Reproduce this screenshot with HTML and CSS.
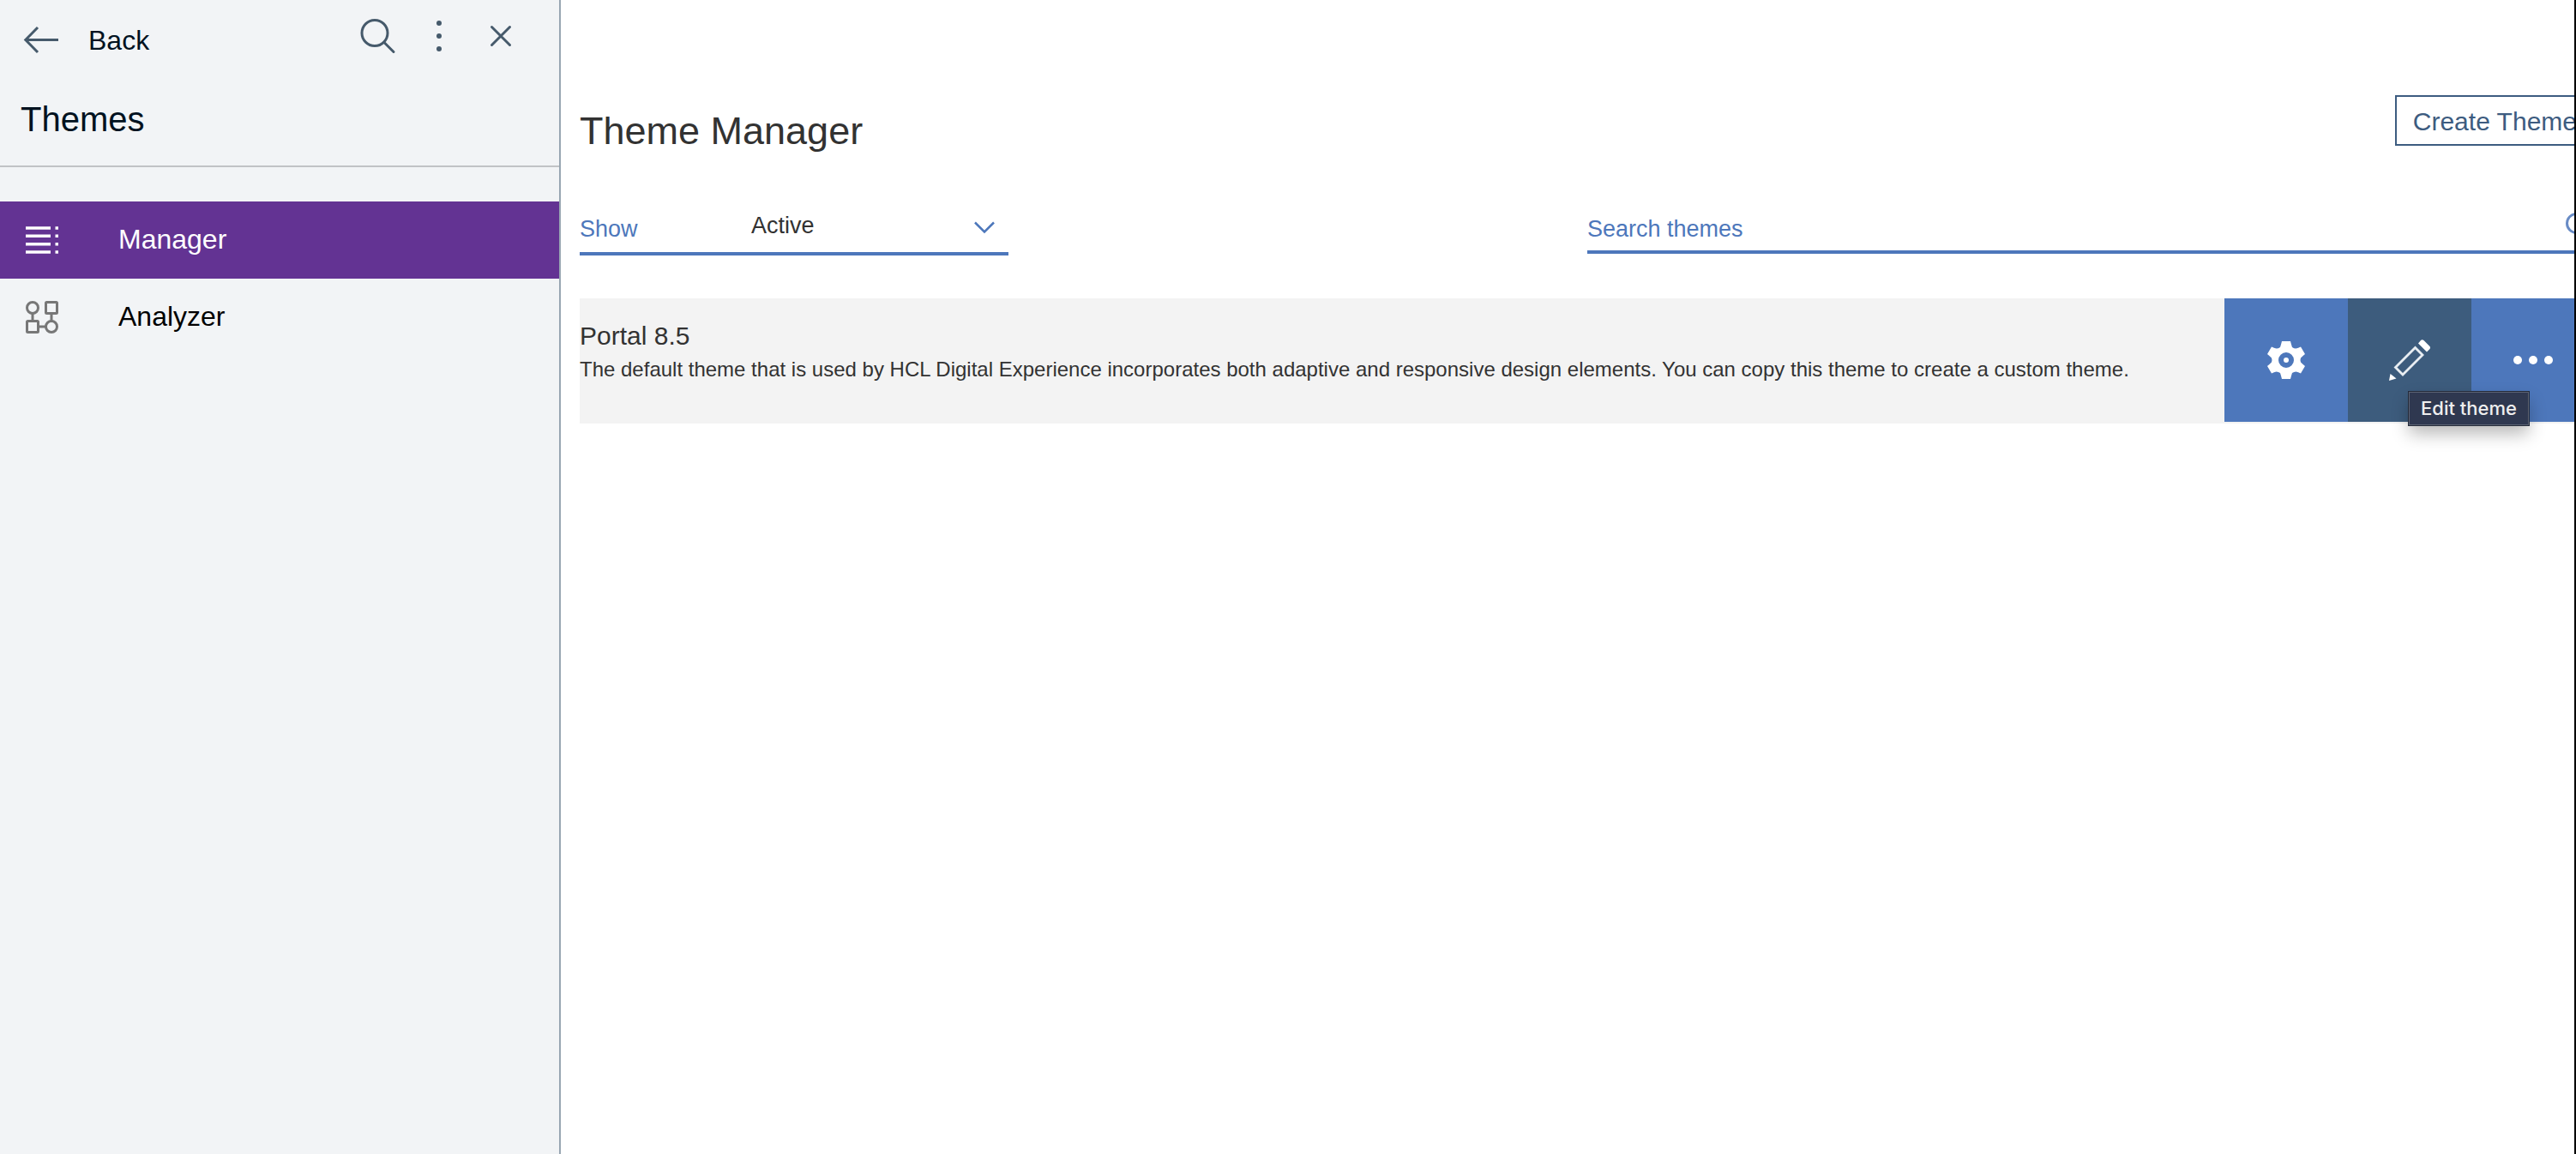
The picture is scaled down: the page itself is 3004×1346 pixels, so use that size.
FILE: index.html
```html
<!DOCTYPE html>
<html lang="en">
<head>
<meta charset="utf-8">
<title>Theme Manager</title>
<link rel="stylesheet" href="styles.css">
</head>
<body>
<div class="app">
  <aside class="sidebar">
    <header class="sidebar-header">
      <div class="toolbar">
        <a class="back" href="#">
          <svg width="40" height="32" viewBox="0 0 40 32" aria-hidden="true"><path d="M40 15.500H2M16 1L1.800 15.500L16 30" fill="none" stroke="currentColor" stroke-width="3"/></svg>
          Back
        </a>
        <div class="tools">
          <button type="button" class="tool" aria-label="Search">
            <svg width="42" height="42" viewBox="0 0 42 42"><g fill="none" stroke="currentColor" stroke-width="3" stroke-linecap="round"><circle cx="17" cy="17.500" r="15"/><path d="M28 28.500L39 39.500"/></g></svg>
          </button>
          <button type="button" class="tool" aria-label="More">
            <svg width="6" height="36" viewBox="0 0 6 36" fill="currentColor"><circle cx="3" cy="3" r="3"/><circle cx="3" cy="18" r="3"/><circle cx="3" cy="33" r="3"/></svg>
          </button>
          <button type="button" class="tool" aria-label="Close">
            <svg width="24" height="24" viewBox="0 0 24 24"><path d="M1.500 1.500L22.500 22.500M22.500 1.500L1.500 22.500" fill="none" stroke="currentColor" stroke-width="3" stroke-linecap="round"/></svg>
          </button>
        </div>
      </div>
      <h2 class="section-title">Themes</h2>
    </header>
    <nav class="nav">
      <a class="nav-item active" href="#" aria-current="page">
        <svg width="38" height="38" viewBox="0 0 38 38" aria-hidden="true"><path d="M0 5H29M0 14.300H29M0 23.700H29M0 33H29M34.500 5H38M34.500 14.300H38M34.500 23.700H38M34.500 33H38" stroke="currentColor" stroke-width="3.400"/></svg>
        <span class="nav-text">Manager</span>
      </a>
      <a class="nav-item" href="#">
        <svg class="muted" width="38" height="38" viewBox="0 0 38 38" aria-hidden="true"><g fill="none" stroke="currentColor" stroke-width="3"><circle cx="8" cy="8" r="6.500"/><circle cx="30" cy="30" r="6.500"/><rect x="23.500" y="1.500" width="13" height="13" rx="1"/><rect x="1.500" y="23.500" width="13" height="13" rx="1"/><path d="M8 14V24M30 14V24M14 30H24"/></g></svg>
        <span class="nav-text">Analyzer</span>
      </a>
    </nav>
  </aside>
  <main class="main">
    <div class="content">
      <div class="title-bar">
        <h1 class="page-title">Theme Manager</h1>
        <button type="button" class="create">Create Theme</button>
      </div>
      <div class="filters">
        <div class="show-field">
          <label class="show-label" for="show">Show</label>
          <select class="show-select" id="show"><option>Active</option><option>Inactive</option></select>
          <svg class="chevron" width="24" height="14" viewBox="0 0 24 14" aria-hidden="true"><path d="M1 1.500L12 12.500L23 1.500" fill="none" stroke="currentColor" stroke-width="2.500"/></svg>
        </div>
        <div class="search-field">
          <input class="search-input" type="text" placeholder="Search themes" aria-label="Search themes">
          <svg class="search-icon" width="34" height="34" viewBox="0 0 34 34" aria-hidden="true"><g fill="none" stroke="currentColor" stroke-width="3"><circle cx="12.500" cy="12.500" r="11"/><path d="M20.500 20.500L32 32"/></g></svg>
        </div>
      </div>
      <article class="theme">
        <div class="theme-text">
          <h3 class="theme-name">Portal 8.5</h3>
          <p class="theme-desc">The default theme that is used by HCL Digital Experience incorporates both adaptive and responsive design elements. You can copy this theme to create a custom theme.</p>
        </div>
        <div class="actions">
          <button type="button" class="action" aria-label="Theme settings">
            <svg width="46" height="46" viewBox="0 0 46 46"><path fill="#fff" fill-rule="evenodd" d="M18 1H28Q29 5 30 8Q32 9.500 34.500 9.500Q37 9 40 7.500L45 16Q42 18.500 40 20.500Q39 23 40 25.500Q42 27.500 45 30L40 38.500Q37 37 34.500 36.500Q32 36.500 30 38Q29 41 28 45H18Q17 41 16 38Q14 36.500 11.500 36.500Q9 37 6 38.500L1 30Q4 27.500 6 25.500Q7 23 6 20.500Q4 18.500 1 16L6 7.500Q9 9 11.500 9.500Q14 9.500 16 8Q17 5 18 1ZM23 14A9 9 0 1 0 23 32A9 9 0 1 0 23 14Z"/><circle cx="23" cy="23" r="3" fill="#fff"/></svg>
          </button>
          <button type="button" class="action selected" aria-describedby="edit-tip" aria-label="Edit theme">
            <svg width="48" height="48" viewBox="0 0 48 48"><path d="M30.500 9.500L39 18L16 41L7.500 32.500Z" fill="none" stroke="#e8edf2" stroke-width="2.800"/><path d="M34 4.500L37 1Q38.500 -.500 40.500 1L47.500 8Q48.500 9.500 47.500 11L44 14.500ZM0 48L1.500 40L8.500 45.500Z" fill="#fff"/></svg>
          </button>
          <button type="button" class="action" aria-label="More actions">
            <svg width="46" height="10" viewBox="0 0 46 10" fill="#fff"><circle cx="5" cy="5" r="5"/><circle cx="23" cy="5" r="5"/><circle cx="41" cy="5" r="5"/></svg>
          </button>
          <span class="tooltip" role="tooltip" id="edit-tip">Edit theme</span>
        </div>
      </article>
    </div>
  </main>
</div>
</body>
</html>
```
FILE: styles.css
```css
* { box-sizing: border-box; }

body {
  margin: 0;
  font-family: "Liberation Sans", Arial, sans-serif;
  color: #323232;
  background: #fff;
}

h1, h2, h3, p { margin: 0; font-weight: 400; }
svg { display: block; flex: none; overflow: visible; }
a { color: inherit; text-decoration: none; }
button, input, select { font-family: inherit; margin: 0; border-radius: 0; }

.app {
  display: flex;
  min-height: 100vh;
  overflow: hidden;
  border-right: 2px solid #000;
}

.sidebar {
  flex: none;
  width: 654px;
  background: #f2f4f6;
  border-right: 2px solid #98a6b2;
}

.sidebar-header {
  height: 195px;
  border-bottom: 2px solid #c1c3c6;
  color: #01121f;
}

.toolbar {
  display: flex;
  justify-content: space-between;
  padding: 20px 56px 0 28px;
}

.back {
  display: flex;
  align-items: center;
  gap: 35px;
  height: 54px;
  font-size: 32px;
}

.back svg, .tool { color: #465a6b; }

.tools {
  display: flex;
  align-items: center;
  gap: 47px;
  height: 44px;
}

.tool {
  padding: 0;
  border: 0;
  background: none;
}

.tool + .tool:last-child { margin-left: 10px; }

.section-title {
  padding: 42px 24px 0;
  font-size: 40px;
  line-height: 46px;
}

.nav { padding-top: 40px; }

.nav-item {
  display: flex;
  align-items: center;
  gap: 70px;
  height: 90px;
  padding-left: 30px;
  font-size: 32px;
  color: #000;
}

.nav-item.active { background: #633393; color: #fff; }
.nav-text { padding-bottom: 2px; }
.muted { color: #777; }

.main {
  flex: 1;
  min-width: 0;
  padding: 111px 0 0 22px;
}

/* The panel runs a little past the edge of the window. */
.content { margin-right: -24px; }

.title-bar {
  display: flex;
  justify-content: space-between;
  align-items: flex-start;
  height: 123px;
}

.page-title {
  padding-top: 16px;
  font-size: 45px;
  line-height: 52px;
}

.create {
  height: 59px;
  padding: 2px 19px 0;
  border: 2px solid #3d5c80;
  background: #fff;
  color: #3d5c80;
  font-size: 30px;
}

.filters {
  display: grid;
  grid-template-columns: 1fr 1fr;
  align-items: start;
  height: 114px;
  font-size: 27px;
  color: #4d77bb;
}

.show-field {
  position: relative;
  display: flex;
  align-items: center;
  width: 500px;
  height: 64px;
  border-bottom: 4px solid #4d77bb;
}

.show-label { width: 200px; padding-top: 6px; }

.show-select {
  flex: 1;
  height: 60px;
  padding: 0 60px 2px 0;
  border: 0;
  appearance: none;
  background: none;
  color: #323232;
  font-size: 27px;
}

.chevron {
  position: absolute;
  right: 16px;
  top: 24px;
  pointer-events: none;
}

.search-field {
  display: flex;
  align-items: center;
  height: 62px;
  border-bottom: 4px solid #4d77bb;
}

.search-input {
  flex: 1;
  min-width: 0;
  height: 58px;
  padding: 8px 0 0;
  border: 0;
  background: none;
  font-size: 27px;
}

.search-input::placeholder { color: #4d77bb; opacity: 1; }
.search-icon { margin-top: 4px; opacity: .85; }

.theme {
  display: flex;
  justify-content: space-between;
  min-height: 146px;
  background: #f3f3f3;
}

.theme-text { padding-top: 26px; }
.theme-name { font-size: 30px; line-height: 36px; }
.theme-desc { font-size: 24px; line-height: 42px; }

.actions {
  position: relative;
  display: flex;
  flex: none;
}

.action {
  display: flex;
  align-items: center;
  justify-content: center;
  width: 144px;
  height: 144px;
  padding: 0;
  border: 0;
  background: #4d77bb;
}

.action.selected { background: #3d5c7d; }

.tooltip {
  position: absolute;
  left: 215px;
  top: 109px;
  width: 140px;
  border: 1px solid #5b6272;
  background: #2f3850;
  color: #eee;
  font-family: Inter, sans-serif;
  font-size: 22px;
  font-weight: 500;
  line-height: 37px;
  text-align: center;
  white-space: nowrap;
  box-shadow: 0 0 0 1px #232a3a, 0 10px 20px rgba(0, 0, 0, .28);
}
```
